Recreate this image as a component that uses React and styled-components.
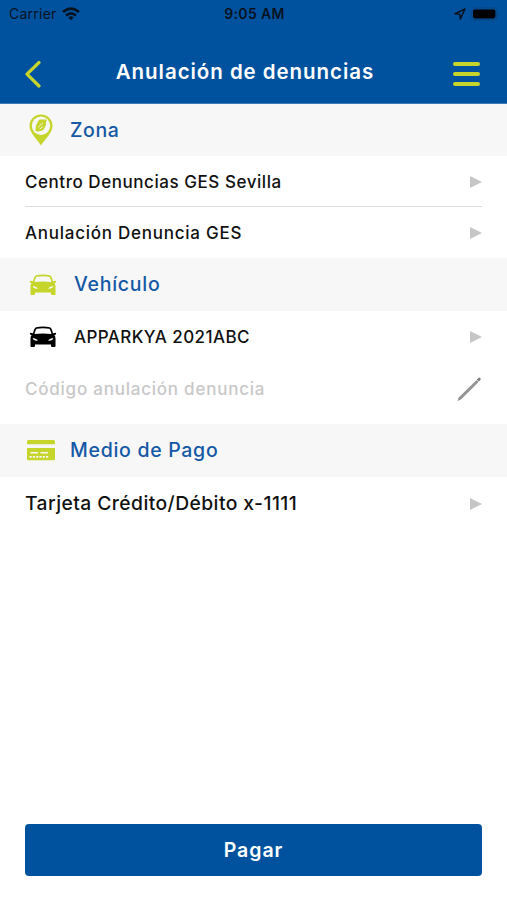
import React from "react";
import styled, { createGlobalStyle } from "styled-components";

const CarIcon = () => (
  <svg width="28" height="22" viewBox="0 0 28 22" fill="currentColor">
    <path
      fillRule="evenodd"
      d="M7 1.3Q14 -.5 21 1.3Q22.8 2 24 7.3L26.5 6.7Q27.6 7 26.8 8.4L25.4 9.2Q26.5 10.2 26.5 12.5V20Q26.5 21 25.5 21H23Q22 21 22 20V18.4H6V20Q6 21 5 21H2.5Q1.5 21 1.5 20V12.5Q1.5 10.2 2.6 9.2L1.2 8.4Q.4 7 1.5 6.7L4 7.3Q5.2 2 7 1.3ZM7.7 2.8Q6.8 3.3 5.5 8Q14 6.8 22.5 8Q21.2 3.3 20.3 2.8Q14 1.5 7.7 2.8ZM3.8 12Q4.2 15 8.8 14.7Q8.5 13 3.8 12ZM24.2 12Q23.8 15 19.2 14.7Q19.5 13 24.2 12Z"
    />
  </svg>
);

const PinIcon = () => (
  <svg width="24" height="32" viewBox="0 0 24 32">
    <path d="M12 31.5C9.5 26.5 .5 19.5 .5 11.7A11.5 11.2 0 0 1 23.5 11.7C23.5 19.5 14.5 26.5 12 31.5Z" fill="#c5d52c" />
    <circle cx="12" cy="11.7" r="9.2" fill="#f7f7f7" />
    <path d="M6.4 17L7 11.5L9.4 6.8Q10 5.5 11.5 5.5H17.8L16.8 9.2L17.2 10.5L14.8 15.2Q14.2 16.6 12.6 16.8L8.8 17.6Z" fill="#c5d52c" />
    <path d="M9.2 13.2L14 8.6M10.6 15.2L13.8 12.6" fill="none" stroke="#f7f7f7" strokeWidth="0.9" />
  </svg>
);

const CardIcon = () => (
  <svg width="28" height="21" viewBox="0 0 28 21">
    <path d="M1.5 0H26.5Q28 0 28 1.5V4.3H0V1.5Q0 0 1.5 0ZM0 8H28V18.7Q28 20.3 26.5 20.3H1.5Q0 20.3 0 18.7Z" fill="#c5d52c" />
    <path d="M3.5 12.8H11M13.5 12.8H21" stroke="#f7f7f7" strokeWidth="1.4" />
    <path d="M2.5 16.8H21.5" stroke="#f7f7f7" strokeWidth="1.7" strokeDasharray="2.2 1.1" />
  </svg>
);

const PencilIcon = () => (
  <svg width="26" height="26" viewBox="0 0 26 26">
    <path d="M1.5 25L2.7 21.4L20.6 3.9L22.6 5.9L5 23.4Z" fill="#949494" />
    <path d="M20.9 3.6L22.4 2Q23.3 1.2 24.2 2Q25.2 3 24.4 4L22.9 5.6Z" fill="#7c7c7c" />
  </svg>
);

const App = () => {
  return (
    <Screen>
      <GlobalStyle />
      <StatusBar>
        <Carrier>
          <Label $size={14} $spacing={0.25}>Carrier</Label>
          <svg width="18" height="14" viewBox="0 0 18 14">
            <g fill="none" stroke="#06131f" strokeWidth="2.7">
              <path d="M1 5.1Q9 -2 17 5.1" />
              <path d="M4 8.6Q9 4.2 14 8.6" />
            </g>
            <path d="M6.2 10.4Q9 8.2 11.8 10.4L9 13.3Z" fill="#06131f" />
          </svg>
        </Carrier>
        <Label $size={14} $weight={600} $spacing={0.35}>9:05 AM</Label>
        <Battery>
          <svg width="12" height="12" viewBox="0 0 12 12">
            <path d="M.9 5.8L11 1L6.3 11.1L5.8 6.2Z" fill="none" stroke="#06131f" strokeWidth="1.5" strokeLinejoin="round" />
          </svg>
          <svg width="29" height="14" viewBox="0 0 29 14">
            <rect x=".8" y="1" width="25" height="12" rx="3" fill="none" stroke="#0b437c" />
            <rect x="2" y="2.4" width="22.4" height="9" rx="1.8" fill="#000" />
            <path d="M27.3 5Q29 7 27.3 9Z" fill="#0b437c" />
          </svg>
        </Battery>
      </StatusBar>
      <Header>
        <svg width="18" height="28" viewBox="0 0 18 28">
          <path d="M15 2.5L3 14.2L15 26" fill="none" stroke="#c5d52c" strokeWidth="3.2" strokeLinecap="round" strokeLinejoin="round" />
        </svg>
        <Label as="h1" $size={20.5} $weight={600} $spacing={0.95}>Anulación de denuncias</Label>
        <Menu>
          <span />
          <span />
          <span />
        </Menu>
      </Header>

      <Section $height={52}>
        <IconBox $width={28} $gap={15}><PinIcon /></IconBox>
        <Label $size={19.5} $spacing={0.6}>Zona</Label>
      </Section>
      <Row $height={51} $line>
        <Label $size={17} $spacing={0.55}>Centro Denuncias GES Sevilla</Label>
        <Arrow />
      </Row>
      <Row $height={51}>
        <Label $size={17} $spacing={0.75}>Anulación Denuncia GES</Label>
        <Arrow />
      </Row>

      <Section $height={53}>
        <IconBox $width={32} $gap={15}><CarIcon /></IconBox>
        <Label $size={19.5} $spacing={0.75}>Vehículo</Label>
      </Section>
      <Row $height={51}>
        <IconBox $width={32} $gap={15}><CarIcon /></IconBox>
        <Label $size={17} $spacing={0.42}>APPARKYA 2021ABC</Label>
        <Arrow />
      </Row>
      <Row $height={53} $muted>
        <Label $size={17} $spacing={0.77}>Código anulación denuncia</Label>
        <PencilIcon />
      </Row>

      <Section $height={53}>
        <IconBox $width={28} $gap={15}><CardIcon /></IconBox>
        <Label $size={19.5} $spacing={0.7}>Medio de Pago</Label>
      </Section>
      <Row $height={53}>
        <Label $size={19.3} $spacing={0.43}>Tarjeta Crédito/Débito x-1111</Label>
        <Arrow />
      </Row>

      <PayButton>
        <Label $size={19.5} $weight={600} $spacing={1}>Pagar</Label>
      </PayButton>
    </Screen>
  );
};

const GlobalStyle = createGlobalStyle`
  * {
    box-sizing: border-box;
  }
  body {
    margin: 0;
    background-color: #ffffff;
  }
`;

const Screen = styled.div`
  display: flex;
  flex-direction: column;
  width: 507px;
  height: 900px;
  overflow: hidden;
  background-color: #ffffff;
  color: #111111;
  font-family: Inter, "Liberation Sans", sans-serif;
`;

const Label = styled.span`
  margin: 0;
  font-size: ${({ $size }) => $size}px;
  font-weight: ${({ $weight }) => $weight || 500};
  letter-spacing: ${({ $spacing }) => $spacing}px;
  line-height: 1.2;
  white-space: nowrap;
`;

const StatusBar = styled.div`
  display: grid;
  grid-template-columns: 1fr auto 1fr;
  align-items: center;
  height: 28px;
  padding: 0 7px 0 9px;
  background-color: #00529f;
  color: #06131f;
`;

const Carrier = styled.div`
  display: flex;
  align-items: center;
  gap: 5px;
  & span {
    font-weight: 400;
  }
`;

const Battery = styled.div`
  display: flex;
  align-items: center;
  justify-content: flex-end;
  gap: 5px;
`;

const Header = styled.header`
  display: flex;
  justify-content: space-between;
  align-items: center;
  height: 76px;
  padding: 17px 27px 0 24px;
  border-bottom: 1px solid #3f7eb8;
  background-color: #00529f;
  color: #ffffff;
  & h1 {
    margin: 0 0 4px -5px;
  }
`;

const Menu = styled.div`
  display: flex;
  flex-direction: column;
  gap: 6px;
  width: 27px;
  & span {
    height: 4px;
    border-radius: 2px;
    background-color: #c5d52c;
  }
`;

const Section = styled.div`
  display: flex;
  align-items: center;
  height: ${({ $height }) => $height}px;
  padding: 0 25px 0 27px;
  background-color: #f7f7f7;
  color: #1459a5;
  & > div {
    color: #c5d52c;
  }
  & > ${Label} {
    padding-top: 1px;
  }
`;

const IconBox = styled.div`
  display: flex;
  justify-content: center;
  width: ${({ $width }) => $width}px;
  margin-right: ${({ $gap }) => $gap}px;
`;

const Row = styled.div`
  display: flex;
  align-items: center;
  height: ${({ $height }) => $height}px;
  margin: 0 25px ${({ $muted }) => ($muted ? 9 : 0)}px;
  padding-top: ${({ $line }) => ($line ? 2 : 0)}px;
  border-bottom: ${({ $line }) => ($line ? "1px solid #dcdcdc" : "none")};
  color: ${({ $muted }) => ($muted ? "#c8c8c8" : "#111111")};
  & > :last-child {
    margin-left: auto;
  }
  & > ${Label} {
    padding-top: 1px;
  }
  & > ${IconBox} {
    margin-left: 2px;
    color: #000000;
  }
`;

const Arrow = styled.i`
  border-left: 12px solid #c6c6c6;
  border-top: 6px solid transparent;
  border-bottom: 6px solid transparent;
`;

const PayButton = styled.button`
  height: 52px;
  margin: auto 25px 24px;
  padding: 2px 0 0;
  border: 0;
  border-radius: 4px;
  background-color: #00529f;
  color: #ffffff;
  font-family: inherit;
`;

export default App;
